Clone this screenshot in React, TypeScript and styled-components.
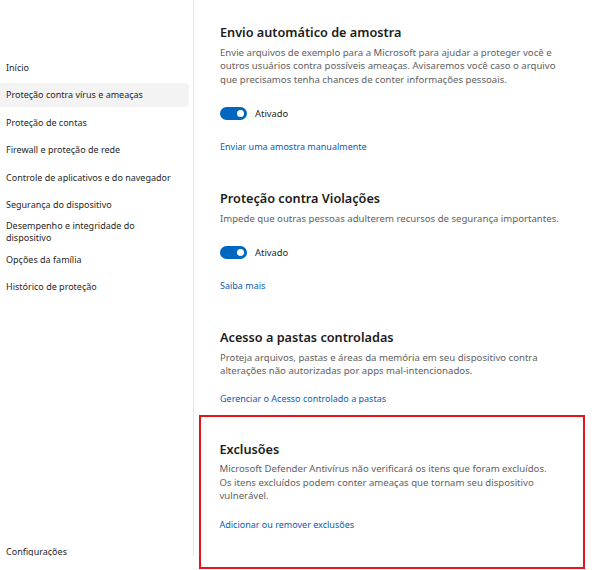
import React from "react";
import styled, { createGlobalStyle } from "styled-components";

const GlobalStyle = createGlobalStyle`
  html, body { margin: 0; padding: 0; background: #ffffff; }
  body { font-family: "Noto Sans", "Open Sans", sans-serif; -webkit-font-smoothing: antialiased; }
  * { box-sizing: border-box; }
`;

const Page = styled.div`
  display: flex;
  width: 600px;
  height: 570px;
  overflow: hidden;
  background: #ffffff;
`;

const Sidebar = styled.nav`
  display: flex;
  flex-direction: column;
  gap: 3.4px;
  width: 194px;
  height: 556px;
  flex: none;
  overflow: hidden;
  padding-top: 56px;
  border-right: 1px solid #e6e6e6;
`;

const NavItem = styled.div<{ $active?: boolean; $bottom?: boolean }>`
  display: flex;
  align-items: center;
  flex: none;
  width: 189px;
  height: 24px;
  padding: 0 6px;
  font-size: 9px;
  line-height: 12px;
  color: #1f1f1f;
  white-space: pre-line;
  background: ${(p) => (p.$active ? "#f3f3f3" : "transparent")};
  border-radius: 0 4px 4px 0;
  ${(p) => (p.$bottom ? "margin-top: auto; margin-bottom: -8px;" : "")}
`;

const Main = styled.main`
  flex: 1;
  display: flex;
  flex-direction: column;
  padding: 22px 15px 0 5px;
`;

const Section = styled.section`
  display: flex;
  flex-direction: column;
  flex: none;
  padding: 0 0 0 21px;
  margin-bottom: 34px;
`;

const HighlightBox = styled.section`
  display: flex;
  flex-direction: column;
  flex: none;
  margin-top: -25px;
  height: 154px;
  padding: 21.5px 0 0 18.5px;
  border: 2.5px solid #e8141c;
`;

const Heading = styled.h2`
  margin: 0 0 3.5px;
  font-size: 12.7px;
  line-height: 20px;
  font-weight: 600;
  color: #1b1b1b;
  white-space: nowrap;
`;

const Description = styled.p`
  margin: 0;
  font-size: 9.6px;
  line-height: 13.5px;
  color: #616161;
  white-space: nowrap;
`;

const ToggleRow = styled.div`
  display: flex;
  align-items: center;
  gap: 8px;
  margin-top: 20.5px;
  height: 13px;
`;

const Track = styled.span`
  position: relative;
  display: inline-block;
  width: 27px;
  height: 13px;
  border-radius: 7px;
  background: #0067c0;
`;

const Knob = styled.span`
  position: absolute;
  top: 3px;
  right: 3px;
  width: 7px;
  height: 7px;
  border-radius: 50%;
  background: #ffffff;
`;

const ToggleLabel = styled.span`
  font-size: 9.4px;
  line-height: 13px;
  color: #1f1f1f;
`;

const Link = styled.a<{ $gap: number }>`
  display: block;
  margin-top: ${(p) => p.$gap}px;
  font-size: 9px;
  line-height: 14px;
  color: #0a5bb5;
  text-decoration: none;
  cursor: pointer;
  white-space: nowrap;
`;

const Toggle = () => (
  <ToggleRow>
    <Track>
      <Knob />
    </Track>
    <ToggleLabel>Ativado</ToggleLabel>
  </ToggleRow>
);

const navItems = [
  "Início",
  "Proteção contra vírus e ameaças",
  "Proteção de contas",
  "Firewall e proteção de rede",
  "Controle de aplicativos e do navegador",
  "Segurança do dispositivo",
  "Desempenho e integridade do\ndispositivo",
  "Opções da família",
  "Histórico de proteção",
];

export default function App() {
  return (
    <>
      <GlobalStyle />
      <Page>
        <Sidebar>
          {navItems.map((item, i) => (
            <NavItem key={item} $active={i === 1}>
              {item}
            </NavItem>
          ))}
          <NavItem $bottom>Configurações</NavItem>
        </Sidebar>
        <Main>
          <Section>
            <Heading>Envio automático de amostra</Heading>
            <Description>
              Envie arquivos de exemplo para a Microsoft para ajudar a proteger você e
              <br />
              outros usuários contra possíveis ameaças. Avisaremos você caso o arquivo
              <br />
              que precisamos tenha chances de conter informações pessoais.
            </Description>
            <Toggle />
            <Link $gap={20.5}>Enviar uma amostra manualmente</Link>
          </Section>
          <Section>
            <Heading>Proteção contra Violações</Heading>
            <Description>
              Impede que outras pessoas adulterem recursos de segurança importantes.
            </Description>
            <Toggle />
            <Link $gap={20.5}>Saiba mais</Link>
          </Section>
          <Section>
            <Heading>Acesso a pastas controladas</Heading>
            <Description>
              Proteja arquivos, pastas e áreas da memória em seu dispositivo contra
              <br />
              alterações não autorizadas por apps mal-intencionados.
            </Description>
            <Link $gap={14.5}>Gerenciar o Acesso controlado a pastas</Link>
          </Section>
          <HighlightBox>
            <Heading>Exclusões</Heading>
            <Description>
              Microsoft Defender Antivírus não verificará os itens que foram excluídos.
              <br />
              Os itens excluídos podem conter ameaças que tornam seu dispositivo
              <br />
              vulnerável.
            </Description>
            <Link $gap={15}>Adicionar ou remover exclusões</Link>
          </HighlightBox>
        </Main>
      </Page>
    </>
  );
}
